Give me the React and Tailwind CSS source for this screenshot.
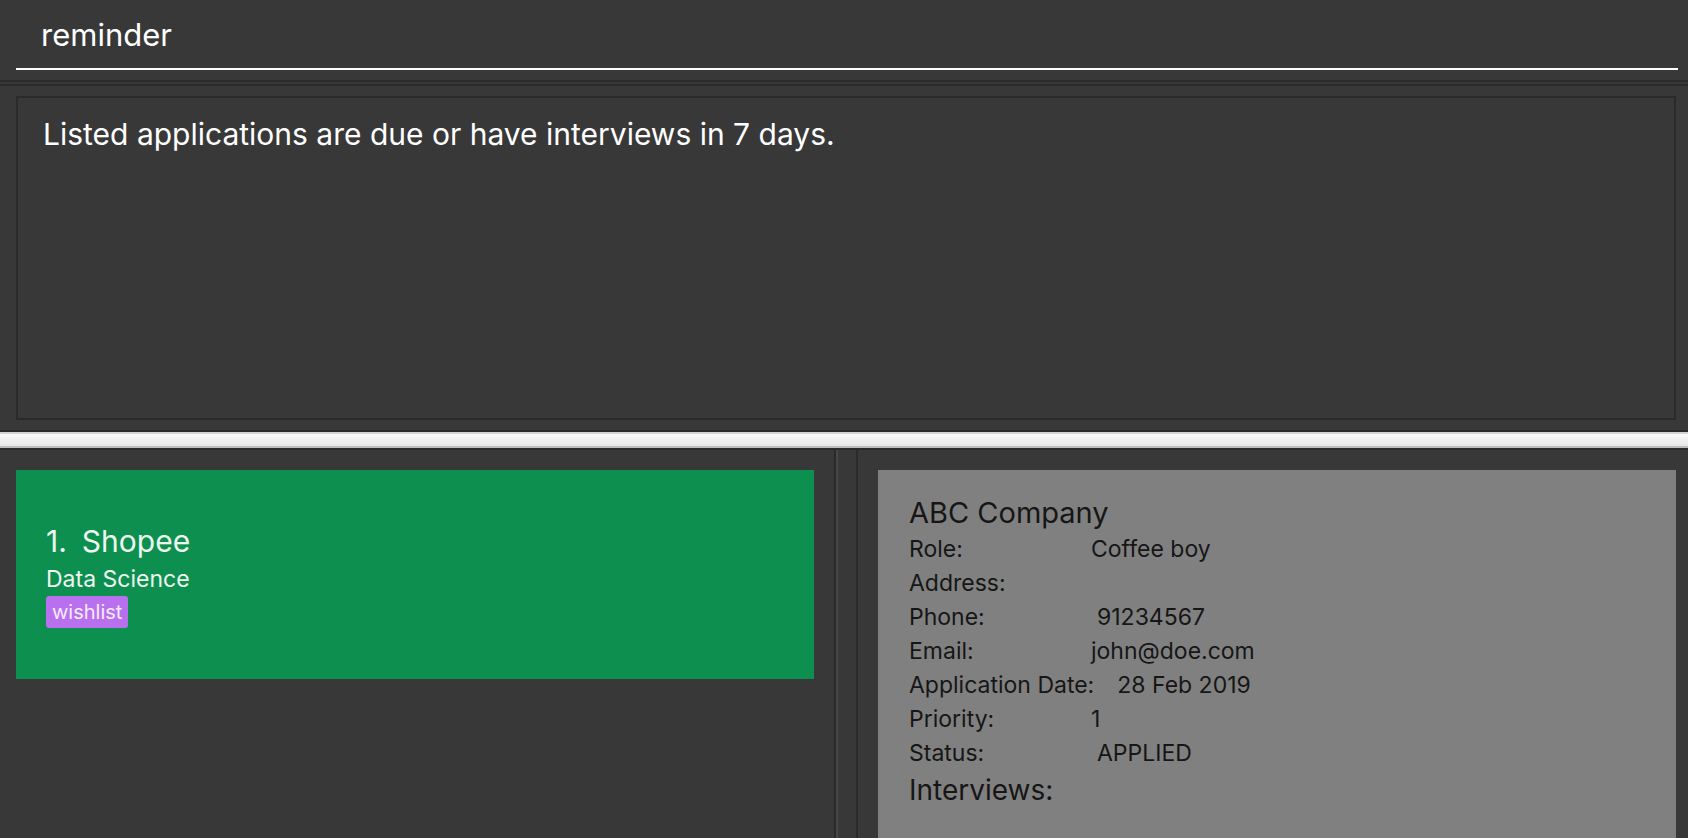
import React from 'react';

const details = [
  { label: 'Role:', value: 'Coffee boy', pad: 'pl-0' },
  { label: 'Address:', value: '', pad: 'pl-0' },
  { label: 'Phone:', value: '91234567', pad: 'pl-[6px]' },
  { label: 'Email:', value: 'john@doe.com', pad: 'pl-0' },
  { label: 'Priority:', value: '1', pad: 'pl-0' },
  { label: 'Status:', value: 'APPLIED', pad: 'pl-[6px]' },
];

function DetailRow({ label, value, pad }) {
  return (
    <div className="flex h-[34px] items-center">
      <span className="w-[182px] shrink-0">{label}</span>
      <span className={pad}>{value}</span>
    </div>
  );
}

export default function App() {
  const rows = details.slice(0, 4);
  const rest = details.slice(4);

  return (
    <div className="flex h-[838px] w-[1688px] flex-col overflow-hidden bg-[#383838] font-['Inter',sans-serif]">
      {/* command box */}
      <div className="h-[80px] shrink-0 pl-[16px] pr-[10px] pt-[13px]">
        <div className="h-[57px] border-b-2 border-white pl-[25px] text-[31px] leading-[44px] text-white">
          reminder
        </div>
      </div>
      <div className="h-[2px] shrink-0 bg-[#2a2a2a]" />
      <div className="h-[2px] shrink-0" />
      <div className="h-[2px] shrink-0 bg-[#2a2a2a]" />

      {/* result display */}
      <div className="h-[344px] shrink-0 pb-[10px] pl-[16px] pr-[12px] pt-[10px]">
        <div className="h-full border-2 border-[#2a2a2a] px-[25px] pt-[16px] text-[30px] leading-[40px] text-white">
          Listed applications are due or have interviews in 7 days.
        </div>
      </div>

      {/* splitter */}
      <div className="h-[2px] shrink-0 bg-[#2a2a2a]" />
      <div className="h-[2px] shrink-0 bg-[#d2d2d2]" />
      <div className="h-[12px] shrink-0 bg-gradient-to-b from-[#fafafa] to-[#e6e6e6]" />
      <div className="h-[2px] shrink-0 bg-[#bdbdbd]" />
      <div className="h-[2px] shrink-0 bg-[#2a2a2a]" />

      {/* list + detail */}
      <div className="flex min-h-0 flex-1">
        <div className="w-[836px] shrink-0 border-r-2 border-[#2a2a2a] pl-[16px] pr-[20px] pt-[20px]">
          <div className="flex h-[209px] flex-col bg-[#0d904f] pl-[30px] pt-[52px] text-[#eef6f0]">
            <div className="flex gap-[15px] text-[30px] leading-[38px]">
              <span>1.</span>
              <span>Shopee</span>
            </div>
            <div className="mt-[4px] text-[23px] leading-[30px]">Data Science</div>
            <div className="mt-[2px] flex">
              <span className="rounded-[3px] bg-[#b970ef] px-[6px] text-[20px] leading-[32px] text-[#f4ecfb]">
                wishlist
              </span>
            </div>
          </div>
        </div>
        <div className="w-[20px] shrink-0 border-l-2 border-[#474747]" />
        <div className="min-w-0 flex-1 border-l-2 border-[#2a2a2a] pl-[20px] pr-[12px] pt-[20px]">
          <div className="h-full bg-[#808080] pl-[31px] pt-[24px] text-[23px] text-[#161616]">
            <div className="text-[29px] leading-[38px]">ABC Company</div>
            {rows.map((r) => (
              <DetailRow key={r.label} {...r} />
            ))}
            <div className="flex h-[34px] items-center">
              <span className="shrink-0 whitespace-nowrap">Application Date:</span>
              <span className="pl-[23px]">28 Feb 2019</span>
            </div>
            {rest.map((r) => (
              <DetailRow key={r.label} {...r} />
            ))}
            <div className="text-[28px] leading-[40px]">Interviews:</div>
          </div>
        </div>
      </div>
    </div>
  );
}
